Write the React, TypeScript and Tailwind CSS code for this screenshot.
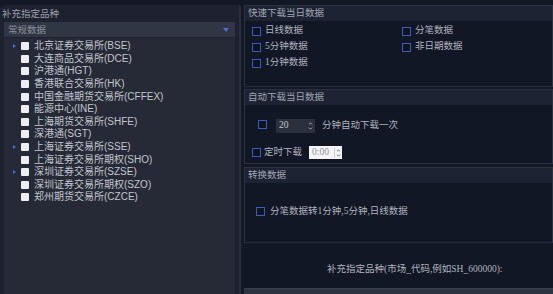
import { ChevronUp, ChevronDown } from 'lucide-react'

const markets = [
  { name: '北京证券交易所(BSE)', arrow: true },
  { name: '大连商品交易所(DCE)' },
  { name: '沪港通(HGT)' },
  { name: '香港联合交易所(HK)' },
  { name: '中国金融期货交易所(CFFEX)' },
  { name: '能源中心(INE)' },
  { name: '上海期货交易所(SHFE)' },
  { name: '深港通(SGT)' },
  { name: '上海证券交易所(SSE)', arrow: true },
  { name: '上海证券交易所期权(SHO)' },
  { name: '深圳证券交易所(SZSE)', arrow: true },
  { name: '深圳证券交易所期权(SZO)' },
  { name: '郑州期货交易所(CZCE)' },
]

const sans = { fontFamily: '"Noto Sans CJK SC", "Noto Sans", sans-serif' }
const listFont = { fontFamily: '"Liberation Sans", "Noto Sans CJK SC", sans-serif' }
const serif = { fontFamily: '"Liberation Serif", "Noto Sans CJK SC", serif' }

const BlueBox = () => <span className="inline-block h-[9px] w-[9px] shrink-0 border border-[#3b5bb8] bg-[#0f1422]" />

const Section = ({ title, className, children }: { title: string; className?: string; children: React.ReactNode }) => (
  <div className={`flex flex-col border border-[#2a3142] bg-[#121726] ${className ?? ''}`}>
    <div className="flex h-[15px] items-center bg-[#1d2333] pl-[3px] text-[9.5px] leading-none text-[#a0a5b2]">{title}</div>
    {children}
  </div>
)

export default function App() {
  return (
    <div className="flex h-[294px] w-[553px] overflow-hidden bg-[#131825] pt-[5px] leading-none" style={sans}>
      {/* left panel */}
      <div className="flex w-[241px] flex-col rounded-t-[3px] border-r-2 border-[#2a2f3c] bg-[#1e2230]">
        <div className="flex h-[17px] items-center pl-[2px] text-[9.5px] text-[#9ca1ad]">补充指定品种</div>
        <div className="mx-[4px] flex h-[15px] items-center justify-between bg-[#313645] pl-[4px] pr-[6px] text-[9.5px] text-[#8a909c]">
          <span>常规数据</span>
          <span className="h-0 w-0 border-x-[3.5px] border-t-[4px] border-x-transparent border-t-[#4a6ee0]" />
        </div>
        <div className="mx-[4px] mt-[1px] flex flex-1 flex-col bg-[#262a36] pt-[2px]" style={listFont}>
          {markets.map((m) => (
            <div key={m.name} className="flex h-[12.6px] items-center text-[10px] text-[#c2c6cf]">
              <span className="flex w-[17px] justify-end pr-[5px]">
                {m.arrow && <span className="h-0 w-0 border-y-[2.5px] border-l-[3px] border-y-transparent border-l-[#4a6ee0]" />}
              </span>
              <span className="mr-[5px] h-[8px] w-[8px] rounded-[1px] bg-[#eceef2]" />
              <span>{m.name}</span>
            </div>
          ))}
        </div>
      </div>

      {/* right panel */}
      <div className="ml-[3px] flex flex-1 flex-col" style={serif}>
        <Section title="快速下载当日数据" className="h-[82px]">
          <div className="grid grid-cols-[150px_1fr] gap-y-[6px] pl-[7px] pt-[5px] text-[9.5px] text-[#b0b4be]">
            <label className="flex h-[10px] items-center gap-[4px]"><BlueBox />日线数据</label>
            <label className="flex h-[10px] items-center gap-[4px]"><BlueBox />分笔数据</label>
            <label className="flex h-[10px] items-center gap-[4px]"><BlueBox />5分钟数据</label>
            <label className="flex h-[10px] items-center gap-[4px]"><BlueBox />非日期数据</label>
            <label className="flex h-[10px] items-center gap-[4px]"><BlueBox />1分钟数据</label>
          </div>
        </Section>

        <Section title="自动下载当日数据" className="mt-[2px] h-[75px]">
          <div className="flex flex-col pl-[7px] text-[9.5px] text-[#b0b4be]">
            <div className="mt-[14px] flex items-center">
              <span className="ml-[6px]"><BlueBox /></span>
              <div className="ml-[9px] flex h-[14px] w-[39px] items-center justify-between bg-[#2b303d] pl-[3px] pr-[2px] text-[#c5c8d0]">
                <span>20</span>
                <span className="flex flex-col text-[#c5c8d0]">
                  <ChevronUp size={5} strokeWidth={4} />
                  <ChevronDown size={5} strokeWidth={4} />
                </span>
              </div>
              <span className="ml-[7px]">分钟自动下载一次</span>
            </div>
            <div className="mt-[13px] flex items-center">
              <BlueBox />
              <span className="ml-[3px]">定时下载</span>
              <div className="ml-[7px] flex h-[13px] w-[33px] items-center justify-between bg-[#f4f5f7] pl-[3px] pr-[1px] text-[#8d919a]">
                <span>0:00</span>
                <span className="flex flex-col border-l border-[#c9ccd2] pl-[1px] text-[#555]">
                  <ChevronUp size={5} strokeWidth={4} />
                  <ChevronDown size={5} strokeWidth={4} />
                </span>
              </div>
            </div>
          </div>
        </Section>

        <Section title="转换数据" className="mt-[3px] h-[76px]">
          <div className="mt-[24px] flex items-center pl-[11px] text-[9.5px] text-[#b0b4be]">
            <BlueBox />
            <span className="ml-[5px]">分笔数据转1分钟,5分钟,日线数据</span>
          </div>
        </Section>

        <div className="flex flex-1 flex-col bg-[#121726]">
          <div className="mt-[22px] pl-[83px] text-[9.5px] text-[#b0b4be]">补充指定品种(市场_代码,例如SH_600000):</div>
          <div className="mt-auto h-[6px] border-t border-[#3a4050] bg-[#2e3342]" />
        </div>
      </div>
    </div>
  )
}
